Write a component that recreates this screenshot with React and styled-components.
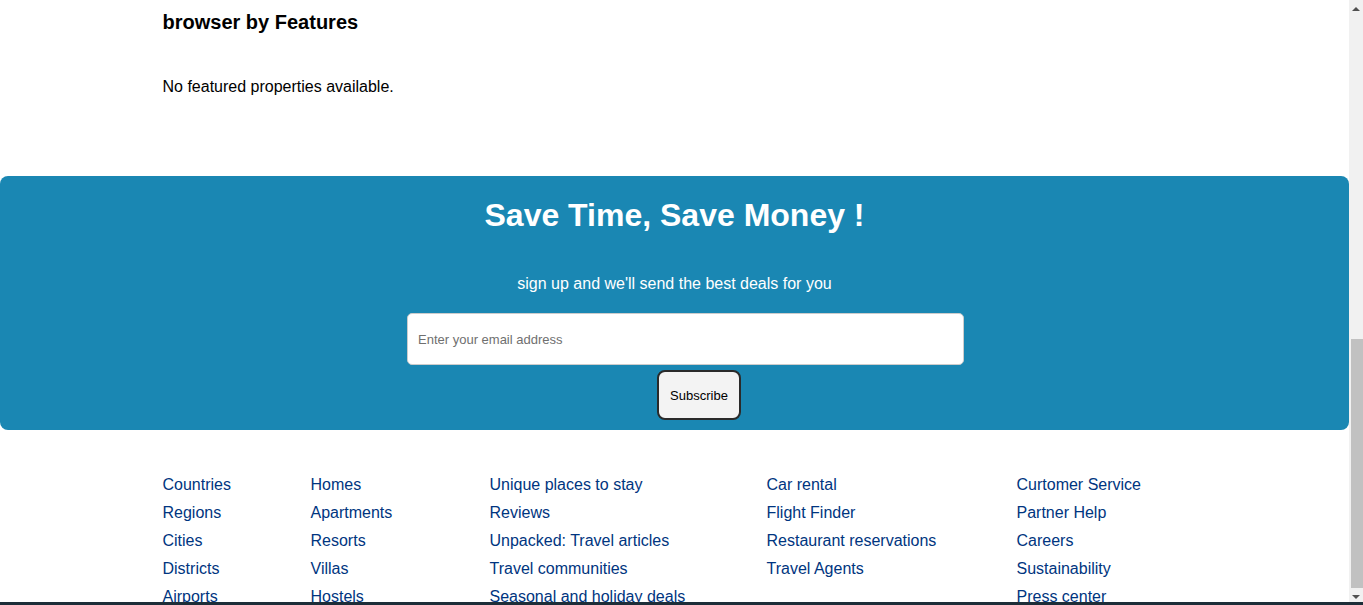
import React from 'react';
import styled, { createGlobalStyle } from 'styled-components';

const GlobalStyle = createGlobalStyle`
  body {
    margin: 0;
    font-family: "Liberation Sans", Arial, sans-serif;
    color: #000;
    background: #fff;
  }
`;

const Page = styled.div`
  display: flex;
  align-items: flex-start;
`;

const Main = styled.main`
  flex: 1;
  min-width: 0;
  display: flex;
  flex-direction: column;
`;

/* fake classic scrollbar, the screenshot was taken scrolled to the bottom */
const ScrollTrack = styled.div`
  position: sticky;
  top: 0;
  width: 14px;
  height: 100vh;
  flex-shrink: 0;
  background: #f1f1f1;
  display: flex;
  flex-direction: column;
`;

const ScrollArrow = styled.div`
  height: 17px;
  display: flex;
  align-items: center;
  justify-content: center;
  &::before {
    content: '';
    border-left: 4px solid transparent;
    border-right: 4px solid transparent;
    ${(p) => (p.$down ? 'border-top: 4px solid #505050;' : 'border-bottom: 4px solid #505050;')}
  }
`;

const ScrollSpace = styled.div`
  flex: 1;
`;

const ScrollThumb = styled.div`
  height: 249px;
  margin-left: 2px;
  background: #c1c1c1;
`;

const Taskbar = styled.div`
  position: fixed;
  left: 0;
  right: 0;
  bottom: 0;
  height: 3px;
  background: #1d2d38;
`;

const Container = styled.div`
  width: 1024px;
  margin: 0 auto;
`;

const Featured = styled(Container)`
  padding-top: 11px;
`;

const SectionTitle = styled.h3`
  margin: 0;
  font-size: 20px;
  line-height: 23px;
  font-weight: 700;
`;

const Empty = styled.p`
  margin: 44px 0 0;
  font-size: 16px;
  line-height: 18px;
`;

const MailBand = styled.section`
  margin-top: 80px;
  background: #1a87b3;
  border-radius: 8px;
  color: #fff;
  display: flex;
  flex-direction: column;
  align-items: center;
  padding: 21px 0 10px;
`;

const MailTitle = styled.h2`
  margin: 0;
  font-size: 32px;
  line-height: 37px;
  font-weight: 700;
`;

const MailDesc = styled.span`
  margin-top: 41px;
  font-size: 16px;
  line-height: 18px;
`;

const MailForm = styled.div`
  margin-top: 20px;
  display: flex;
  flex-direction: column;
  align-items: center;
  gap: 5px;
`;

const EmailInput = styled.input`
  width: 557px;
  height: 52px;
  margin-left: 22px;
  box-sizing: border-box;
  border: 1px solid #ccc;
  border-radius: 5px;
  padding: 0 10px;
  font-family: "Liberation Sans", Arial, sans-serif;
  font-size: 13px;
  outline: none;
  &::placeholder {
    color: #6f6f6f;
  }
`;

const SubscribeButton = styled.button`
  width: 84px;
  height: 50px;
  margin-left: 49px;
  box-sizing: border-box;
  background: #f3f3f3;
  border: 2px solid #2a2a2a;
  border-radius: 8px;
  font-family: "Liberation Sans", Arial, sans-serif;
  font-size: 13px;
  color: #000;
  cursor: pointer;
`;

const FooterLists = styled(Container)`
  margin-top: 41px;
  display: grid;
  grid-template-columns: 148px 179px 277px 250px auto;
`;

const LinkList = styled.ul`
  list-style: none;
  margin: 0;
  padding: 0;
`;

const LinkItem = styled.li`
  font-size: 16px;
  line-height: 28px;
  color: #003580;
  cursor: pointer;
`;

const columns = [
  ['Countries', 'Regions', 'Cities', 'Districts', 'Airports', 'Hotels', 'Places of interest'],
  ['Homes', 'Apartments', 'Resorts', 'Villas', 'Hostels', 'B&Bs', 'Guest houses'],
  ['Unique places to stay', 'Reviews', 'Unpacked: Travel articles', 'Travel communities', 'Seasonal and holiday deals'],
  ['Car rental', 'Flight Finder', 'Restaurant reservations', 'Travel Agents'],
  ['Curtomer Service', 'Partner Help', 'Careers', 'Sustainability', 'Press center', 'Safety resource center', 'Investor relations'],
];

export default function App() {
  return (
    <Page>
      <GlobalStyle />
      <Main>
        <Featured>
          <SectionTitle>browser by Features</SectionTitle>
          <Empty>No featured properties available.</Empty>
        </Featured>

        <MailBand>
          <MailTitle>Save Time, Save Money !</MailTitle>
          <MailDesc>sign up and we'll send the best deals for you</MailDesc>
          <MailForm>
            <EmailInput type="text" placeholder="Enter your email address" />
            <SubscribeButton>Subscribe</SubscribeButton>
          </MailForm>
        </MailBand>

        <FooterLists>
          {columns.map((col, i) => (
            <LinkList key={i}>
              {col.map((item) => (
                <LinkItem key={item}>{item}</LinkItem>
              ))}
            </LinkList>
          ))}
        </FooterLists>
      </Main>
      <ScrollTrack>
        <ScrollArrow />
        <ScrollSpace />
        <ScrollThumb />
        <ScrollArrow $down />
      </ScrollTrack>
      <Taskbar />
    </Page>
  );
}
